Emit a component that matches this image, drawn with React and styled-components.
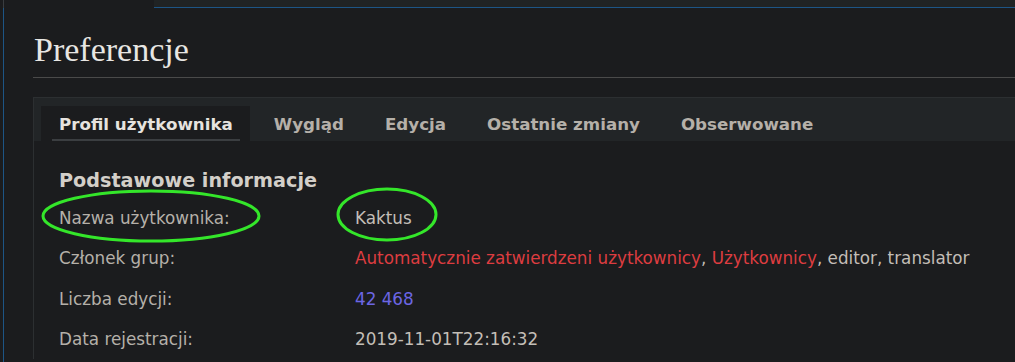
import React from "react";
import styled, { createGlobalStyle } from "styled-components";

const Global = createGlobalStyle`
  html, body { margin: 0; padding: 0; background: #1b1c1e; }
  body { overflow: hidden; width: 1015px; height: 362px; position: relative; }
`;

const Page = styled.div`
  position: relative;
  width: 1015px;
  height: 362px;
  background: #1b1c1e;
`;

const TopRow = styled.div`
  display: flex;
  height: 8px;
`;

const ActiveTabStub = styled.div`
  width: 150px;
  margin-left: 3px;
  border-left: 1px solid #3a3d40;
`;

const TopStrip = styled.div`
  flex: 1;
  background: #202324;
  border-bottom: 1px solid #1d5585;
`;

const Content = styled.div`
  margin-left: 3px;
  border-left: 1px solid #1d5585;
  padding: 0 0 0 29px;
  height: 354px;
  overflow: hidden;
`;

const Title = styled.h1`
  margin: 22px 0 0 0;
  padding: 0 0 8px 1px;
  font-family: "Liberation Serif", "Times New Roman", serif;
  font-weight: normal;
  font-size: 34px;
  line-height: 39px;
  color: #e8e6e3;
  border-bottom: 1px solid #4a4a4a;
`;

const Panel = styled.div`
  margin-top: 19px;
  border: 1px solid #2c2f31;
  border-right: none;
  border-bottom: none;
  font-family: "DejaVu Sans", "Noto Sans", sans-serif;
`;

const TabBar = styled.div`
  display: flex;
  gap: 6px;
  padding: 8px 0 0 7px;
  background: #222527;
`;

const Tab = styled.div`
  position: relative;
  height: 35px;
  display: flex;
  align-items: center;
  padding: 1px 17px 0 18px;
  box-sizing: border-box;
  font-size: 16.7px;
  line-height: 19px;
  font-weight: bold;
  color: ${(p) => (p.$active ? "#e6e3df" : "#b5b0a9")};
  background: ${(p) => (p.$active ? "#1b1c1e" : "transparent")};
  white-space: nowrap;

  &::after {
    content: "";
    display: ${(p) => (p.$active ? "block" : "none")};
    position: absolute;
    left: 11px;
    right: 10px;
    bottom: 0;
    height: 2px;
    background: #3b3e41;
  }
`;

const Body = styled.div`
  padding: 28px 0 0 25px;
`;

const Heading = styled.h2`
  margin: 0 0 5px 0;
  font-size: 19.2px;
  line-height: 24px;
  font-weight: bold;
  color: #d3cfc9;
`;

const InfoGrid = styled.div`
  display: grid;
  grid-template-columns: 296px 1fr;
  font-size: 16.8px;
  line-height: 40.3px;
  white-space: nowrap;
`;

const Label = styled.div`
  color: #b5b0a9;
`;

const Value = styled.div`
  color: #c3beb7;
`;

const RedLink = styled.span`
  color: #dd3c40;
`;

const BlueLink = styled.span`
  color: #6c66e4;
`;

const Overlay = styled.svg`
  position: absolute;
  left: 0;
  top: 0;
  pointer-events: none;
`;

export default function App() {
  return (
    <Page>
      <Global />
      <TopRow>
        <ActiveTabStub />
        <TopStrip />
      </TopRow>
      <Content>
        <Title>Preferencje</Title>
        <Panel>
          <TabBar>
            <Tab $active>Profil użytkownika</Tab>
            <Tab>Wygląd</Tab>
            <Tab>Edycja</Tab>
            <Tab>Ostatnie zmiany</Tab>
            <Tab>Obserwowane</Tab>
          </TabBar>
          <Body>
            <Heading>Podstawowe informacje</Heading>
            <InfoGrid>
              <Label>Nazwa użytkownika:</Label>
              <Value>Kaktus</Value>
              <Label>Członek grup:</Label>
              <Value>
                <RedLink>Automatycznie zatwierdzeni użytkownicy</RedLink>,{" "}
                <RedLink>Użytkownicy</RedLink>, editor, translator
              </Value>
              <Label>Liczba edycji:</Label>
              <Value>
                <BlueLink>42 468</BlueLink>
              </Value>
              <Label>Data rejestracji:</Label>
              <Value>2019-11-01T22:16:32</Value>
            </InfoGrid>
          </Body>
        </Panel>
      </Content>
      <Overlay width="1015" height="362" viewBox="0 0 1015 362">
        <ellipse cx="151" cy="216" rx="108" ry="25" fill="none" stroke="#34e62a" strokeWidth="3" />
        <ellipse cx="387" cy="214.5" rx="49" ry="25.5" fill="none" stroke="#34e62a" strokeWidth="3" />
      </Overlay>
    </Page>
  );
}
